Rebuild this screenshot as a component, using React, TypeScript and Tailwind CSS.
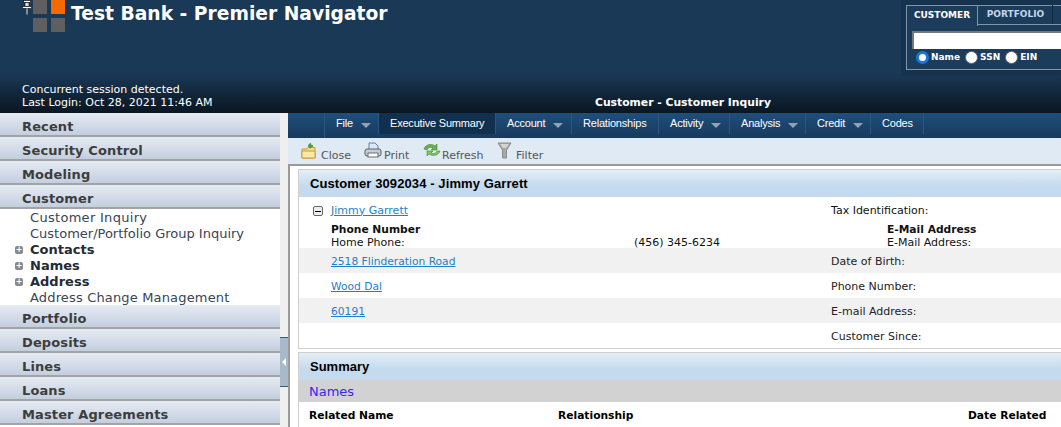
import React from "react";

const dejavu = "font-['DejaVu_Sans',sans-serif]";
const arial = "font-['Liberation_Sans',Arial,sans-serif]";

function SideHead({ label }: { label: string }) {
  return (
    <div className="h-6 pl-[22px] pt-[6px] flex items-center border-b-2 border-[#a3a3a3] bg-gradient-to-b from-[#e6ebf3] to-[#c3cfdf] text-[13px] font-bold tracking-[0.12px] text-[#3d3d3d]">
      {label}
    </div>
  );
}

function SideItem({ label, bold, plus, track }: { label: string; bold?: boolean; plus?: boolean; track?: string }) {
  return (
    <div className={`h-4 pt-[2px] flex items-center pl-[15px] text-[13px] leading-4 ${bold ? "font-bold text-[#252b36]" : "text-[#3a4454]"} ${track ?? ""}`}>
      <span className="w-[15px] flex items-center">
        {plus && (
          <span className="w-2 h-2 rounded-[2px] bg-[#888] text-white flex items-center justify-center text-[8px] leading-none font-bold">+</span>
        )}
      </span>
      {label}
    </div>
  );
}

function NavItem({ label, width, caret, active }: { label: string; width: string; caret?: boolean; active?: boolean }) {
  return (
    <div className={`${width} h-[21px] flex items-center gap-2 pl-[11px] border-r border-[#2d5580] text-white text-[11px] tracking-[-0.2px] ${active ? "bg-[#11304d]" : ""}`}>
      {label}
      {caret && <span className="mt-[3px] border-x-[5px] border-x-transparent border-t-[5px] border-t-[#93a3b5]" />}
    </div>
  );
}

function Radio({ label, on }: { label: string; on?: boolean }) {
  return (
    <label className="flex items-center gap-[2px] text-white text-[9px] font-bold">
      <span className={`w-[13px] h-[13px] rounded-full bg-white ${on ? "border-[3px] border-[#1a73e8]" : "border border-[#666]"}`} />
      {label}
    </label>
  );
}

function Tool({ icon, label, width }: { icon: React.ReactNode; label: string; width: string }) {
  return (
    <div className={`${width} flex items-start text-[11px] text-[#555]`}>
      {icon}
      <span className="mt-[7px] leading-[14px]">{label}</span>
    </div>
  );
}

function CloseIcon() {
  return (
    <svg width="20" height="18" viewBox="0 0 20 18">
      <path d="M1 7h5l1-1.500h7V16H1z" fill="#f7dc83" stroke="#c79a3a" />
      <path d="M1 9h13v7H1z" fill="#fbe9a8" stroke="#c79a3a" />
      <path d="M12 4H7.500M7.500 4l2.500-2.500M7.500 4l2.500 2" stroke="#4f9a4a" strokeWidth="2" fill="none" />
    </svg>
  );
}

function PrintIcon() {
  return (
    <svg width="20" height="17" viewBox="0 0 20 17">
      <path d="M5 1h6l3 3v4H5z" fill="#dce8f7" stroke="#5f7fae" />
      <rect x="1" y="7" width="16" height="7" rx="2" fill="#c9ccd1" stroke="#5d6269" />
      <rect x="4" y="11" width="10" height="4" fill="#fff" stroke="#6a6f76" />
    </svg>
  );
}

function RefreshIcon() {
  return (
    <svg width="20" height="16" viewBox="0 0 20 16">
      <path d="M2 7c1-4 7-6 11-3l2-2v6h-6l2-2C9 5 6 5 5 8z" fill="#6ab04c" stroke="#3f8a35" strokeWidth="0.6" />
      <path d="M18 9c-1 4-7 6-11 3l-2 2V9h6l-2 2c2 1 5 1 6-2z" fill="#82c45f" stroke="#3f8a35" strokeWidth="0.6" />
    </svg>
  );
}

function FilterIcon() {
  return (
    <svg width="19" height="17" viewBox="0 0 19 17">
      <path d="M1 1h13L9.500 8v8h-4V8z" fill="#a8a8a8" stroke="#8b8b8b" />
      <path d="M3 2h9L9 6H6z" fill="#d4d4d4" />
    </svg>
  );
}

function InfoRow({ left, right, bg }: { left?: string; right?: string; bg?: boolean }) {
  return (
    <div className={`h-[25px] pt-1 flex items-center text-[11px] ${bg ? "bg-[#f1f1f1]" : ""}`}>
      <a className="w-[500px] ml-8 text-[10.7px] text-[#1f7fcb] underline">{left}</a>
      <span className="text-[#222]">{right}</span>
    </div>
  );
}

function PanelHead({ children }: { children: React.ReactNode }) {
  return (
    <div className="h-[27px] pl-[11px] flex items-center bg-gradient-to-b from-[#e4eef6] to-[#c4daee] to-60% text-black">
      {children}
    </div>
  );
}

export default function App() {
  return (
    <div className={`w-[1061px] h-[427px] overflow-hidden bg-white flex flex-col ${dejavu}`}>
      {/* top banner */}
      <div className="h-[113px] shrink-0 bg-gradient-to-b from-[#1a3957] from-65% to-[#0a1622] flex flex-col justify-between">
        <div className="flex justify-between">
          <div className="flex items-start pl-[22px]">
            <svg width="11" height="15" viewBox="0 0 11 15">
              <rect x="1.500" y="0.500" width="7" height="2" fill="#fff" stroke="#000" strokeWidth="0.6" />
              <rect x="3" y="2.500" width="4" height="4" fill="#ddd" stroke="#000" strokeWidth="0.6" />
              <rect x="0.500" y="6.500" width="9" height="2" fill="#fff" stroke="#000" strokeWidth="0.6" />
              <rect x="4.500" y="8.500" width="1" height="6" fill="#e5e5e5" />
            </svg>
            <div className="grid grid-cols-[14px_14px] gap-1 mr-[6px]">
              <span className="h-[14px] bg-[#5f5f5f]" />
              <span className="h-[14px] bg-[#f56a00]" />
              <span className="h-[14px] bg-[#5f5f5f]" />
              <span className="h-[14px] bg-[#5f5f5f]" />
            </div>
            <div className="text-[18.7px] leading-[28px] font-bold text-white">Test Bank - Premier Navigator</div>
          </div>
          <div className="w-[161px] h-[76px] bg-[#17324e] pl-[5px] pt-[5px] -mr-px">
            <div className="h-[65px] border border-[#7f95ab] border-r-0 bg-[#1c3c5c]">
              <div className="flex h-5 -mt-px -ml-px">
                <div className="w-[72px] h-[21px] flex items-center justify-center border border-b-0 border-[#7f95ab] bg-[#1c3c5c] text-white text-[9px] font-bold">CUSTOMER</div>
                <div className="h-5 flex-1 flex border-b border-[#7f95ab]">
                  <div className="w-[75px] pl-px flex items-center justify-center border-r border-[#12283f] text-[#c6d6e8] text-[9px] font-bold">PORTFOLIO</div>
                </div>
              </div>
              <div className="ml-[5px] mt-[6px] h-[18px] bg-white border-t-2 border-l-2 border-[#777]" />
              <div className="flex items-center gap-[5px] ml-[9px] mt-[2px]">
                <Radio label="Name" on />
                <Radio label="SSN" />
                <Radio label="EIN" />
              </div>
            </div>
          </div>
        </div>
        <div className="relative flex justify-between items-end pl-[22px] pb-[4px] text-[11px] leading-[13px] text-white">
          <div>
            <div>Concurrent session detected.</div>
            <div>Last Login: Oct 28, 2021 11:46 AM</div>
          </div>
          <div className="w-[773px] pl-[307px] text-[10.8px] font-bold">Customer - Customer Inquiry</div>
        </div>
      </div>

      <div className="flex flex-1 min-h-0">
        {/* left menu */}
        <div className="w-[280px] shrink-0">
          <SideHead label="Recent" />
          <SideHead label="Security Control" />
          <SideHead label="Modeling" />
          <SideHead label="Customer" />
          <SideItem label="Customer Inquiry" track="tracking-[0.3px]" />
          <SideItem label="Customer/Portfolio Group Inquiry" />
          <SideItem label="Contacts" bold plus />
          <SideItem label="Names" bold plus />
          <SideItem label="Address" bold plus />
          <SideItem label="Address Change Management" track="tracking-[0.16px]" />
          <SideHead label="Portfolio" />
          <SideHead label="Deposits" />
          <SideHead label="Lines" />
          <SideHead label="Loans" />
          <SideHead label="Master Agreements" />
        </div>

        {/* splitter */}
        <div className="w-2 shrink-0 bg-[#efefef] flex items-center">
          <div className="w-2 h-[50px] mt-[184px] bg-[#a9b9c9] border-y border-[#3b5a78] flex items-center justify-center">
            <span className="border-y-[4px] border-y-transparent border-r-[4px] border-r-white" />
          </div>
        </div>

        {/* main column */}
        <div className="flex-1 min-w-0 flex flex-col">
          <div className={`h-[25px] shrink-0 pl-9 flex bg-gradient-to-b from-[#1f4e7c] to-[#173a5d] ${arial}`}>
            <div className="flex border-l border-[#2d5580] h-[25px]">
              <NavItem label="File" width="w-[54px]" caret />
              <NavItem label="Executive Summary" width="w-[117px]" active />
              <NavItem label="Account" width="w-[76px]" caret />
              <NavItem label="Relationships" width="w-[87px]" />
              <NavItem label="Activity" width="w-[71px]" caret />
              <NavItem label="Analysis" width="w-[76px]" caret />
              <NavItem label="Credit" width="w-[65px]" caret />
              <NavItem label="Codes" width="w-[53px]" />
            </div>
          </div>

          <div className="h-[26px] shrink-0 pl-[13px] pt-1 flex bg-[#dfeaf4]">
            <Tool width="w-[63px]" label="Close" icon={<CloseIcon />} />
            <Tool width="w-[58px]" label="Print" icon={<PrintIcon />} />
            <Tool width="w-[75px]" label="Refresh" icon={<RefreshIcon />} />
            <Tool width="w-[60px]" label="Filter" icon={<FilterIcon />} />
          </div>

          <div className="flex-1 min-h-0 border-t-2 border-l-2 border-[#9a9a9a] pl-2 pt-[3px] overflow-hidden">
            {/* customer panel */}
            <div className="h-[180px] border border-r-0 border-[#cfcfcf]">
              <PanelHead>
                <span className={`text-[13px] tracking-[0.1px] font-bold ${arial}`}>Customer 3092034 - Jimmy Garrett</span>
              </PanelHead>
              <div className="h-[51px] text-[11px] text-[#111]">
                <div className="h-[26px] pt-[2px] flex items-center">
                  <span className="ml-[14px] w-[10px] h-[10px] border border-[#666] rounded-[2px] bg-[#eee] flex items-center justify-center">
                    <span className="w-[6px] h-px bg-black" />
                  </span>
                  <a className="w-[500px] ml-2 text-[#1f7fcb] underline">Jimmy Garrett</a>
                  <span>Tax Identification:</span>
                </div>
                <div className="flex pl-8 font-bold leading-[13px] text-[10.7px]">
                  <span className="w-[556px]">Phone Number</span>
                  <span>E-Mail Address</span>
                </div>
                <div className="flex pl-8 pt-px leading-[12px]">
                  <span className="w-[303px]">Home Phone:</span>
                  <span className="w-[253px]">(456) 345-6234</span>
                  <span>E-Mail Address:</span>
                </div>
              </div>
              <InfoRow left="2518 Flinderation Road" right="Date of Birth:" bg />
              <InfoRow left="Wood Dal" right="Phone Number:" />
              <InfoRow left="60191" right="E-mail Address:" bg />
              <InfoRow right="Customer Since:" />
            </div>

            {/* summary panel */}
            <div className="mt-[3px] border border-r-0 border-b-0 border-[#cfcfcf]">
              <PanelHead>
                <span className={`text-[13px] font-bold ${arial}`}>Summary</span>
              </PanelHead>
              <div className="h-[22px] pl-[10px] pt-[2px] flex items-center bg-[#d2d2d2] text-[13px] text-[#3a26f0]">Names</div>
              <div className="h-[26px] pl-[10px] pt-[2px] flex items-center text-[10.7px] font-bold text-black">
                <span className="w-[249px]">Related Name</span>
                <span className="w-[410px]">Relationship</span>
                <span>Date Related</span>
              </div>
            </div>
          </div>
        </div>
      </div>
    </div>
  );
}
